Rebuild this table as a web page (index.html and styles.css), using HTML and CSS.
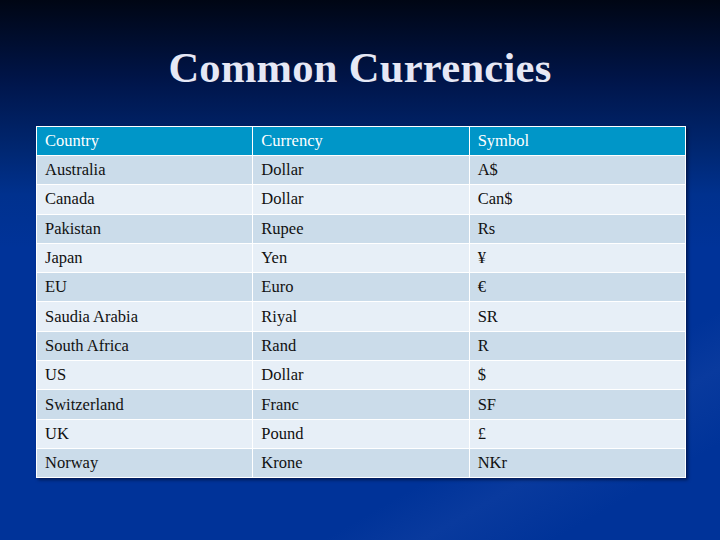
FILE: index.html
```html
<!DOCTYPE html>
<html>
<head>
<meta charset="utf-8">
<link rel="stylesheet" href="styles.css">
</head>
<body>
<div class="slide">
  <h1 class="title">Common Currencies</h1>
  <table class="cur">
    <thead>
      <tr><th>Country</th><th>Currency</th><th>Symbol</th></tr>
    </thead>
    <tbody>
      <tr><td>Australia</td><td>Dollar</td><td>A$</td></tr>
      <tr><td>Canada</td><td>Dollar</td><td>Can$</td></tr>
      <tr><td>Pakistan</td><td>Rupee</td><td>Rs</td></tr>
      <tr><td>Japan</td><td>Yen</td><td>¥</td></tr>
      <tr><td>EU</td><td>Euro</td><td>€</td></tr>
      <tr><td>Saudia Arabia</td><td>Riyal</td><td>SR</td></tr>
      <tr><td>South Africa</td><td>Rand</td><td>R</td></tr>
      <tr><td>US</td><td>Dollar</td><td>$</td></tr>
      <tr><td>Switzerland</td><td>Franc</td><td>SF</td></tr>
      <tr><td>UK</td><td>Pound</td><td>£</td></tr>
      <tr><td>Norway</td><td>Krone</td><td>NKr</td></tr>
    </tbody>
  </table>
</div>
</body>
</html>
```
FILE: styles.css
```css
html, body {
  margin: 0;
  padding: 0;
}
body {
  width: 720px;
  height: 540px;
  overflow: hidden;
  font-family: "Liberation Serif", "DejaVu Serif", serif;
}
.slide {
  width: 720px;
  height: 540px;
  box-sizing: border-box;
  padding-top: 43px;
  background:
    linear-gradient(150deg, rgba(0,0,0,0) 76%, rgba(50,90,180,0.18) 82%, rgba(0,0,0,0) 90%),
    linear-gradient(to bottom, #000614 0%, #00154a 15%, #00266f 27%, #00318e 36%, #003399 46%, #003399 100%);
}
.title {
  margin: 0;
  height: 50px;
  text-align: center;
  font-size: 42.5px;
  line-height: 50px;
  font-weight: bold;
  color: #e6e8f5;
  letter-spacing: 0.3px;
}
.cur {
  margin: 33px 0 0 36px;
  width: 650px;
  border-collapse: collapse;
  table-layout: fixed;
  box-shadow: 2px 2px 3px rgba(0,0,20,0.5);
}
.cur thead tr {
  height: 29px;
}
.cur tbody tr {
  height: 29.3px;
}
.cur th, .cur td {
  border: 1.5px solid #ffffff;
  padding: 0 8px;
  text-align: left;
  font-size: 16.5px;
  line-height: 20px;
  font-weight: normal;
  color: #111;
}
.cur th {
  background: #0096c8;
  color: #ffffff;
}
.cur tbody tr:nth-child(odd) td {
  background: #cbdcea;
}
.cur tbody tr:nth-child(even) td {
  background: #e7eff7;
}
```
